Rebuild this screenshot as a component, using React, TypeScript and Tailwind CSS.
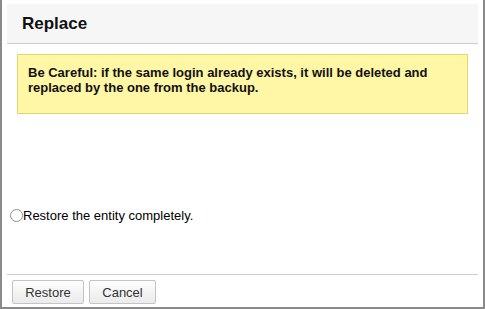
import React from "react";

export default function App() {
  return (
    <div className="w-[485px] h-[309px] bg-white border-l-2 border-r-2 border-b-2 border-[#8a8a8a] font-['Liberation_Sans',Arial,sans-serif] text-[#111] flex flex-col px-[5px] pt-[4px] box-border">
      <div className="h-[40px] bg-[#f6f6f6] border-b border-[#cccccc] flex items-center pl-[15px] text-[17px] font-bold">
        Replace
      </div>
      <div className="mx-[10px] mt-[10px] border border-[#e3d66b] bg-[#fff6a6] px-[10px] pt-[10px] pb-[18px] text-[13px] font-bold leading-[15px]">
        Be Careful: if the same login already exists, it will be deleted and replaced by the one from the backup.
      </div>
      <div className="mt-[94px] ml-[3px] flex items-center h-[15px] text-[13px] leading-[15px] text-black">
        <span className="w-[13px] h-[13px] rounded-full border border-[#8f8f8f] bg-white mr-[0px] shrink-0"></span>
        <span>Restore the entity completely.</span>
      </div>
      <div className="mt-auto border-t border-[#cccccc] pt-[5px] pb-[3px] pl-[5px] flex gap-[5px]">
        <button className="w-[72px] h-[24px] border border-[#c4c4c4] rounded-[2px] bg-gradient-to-b from-[#fdfdfd] to-[#ebebeb] text-[13px] text-[#333] leading-none">
          Restore
        </button>
        <button className="w-[67px] h-[24px] border border-[#c4c4c4] rounded-[2px] bg-gradient-to-b from-[#fdfdfd] to-[#ebebeb] text-[13px] text-[#333] leading-none">
          Cancel
        </button>
      </div>
    </div>
  );
}
